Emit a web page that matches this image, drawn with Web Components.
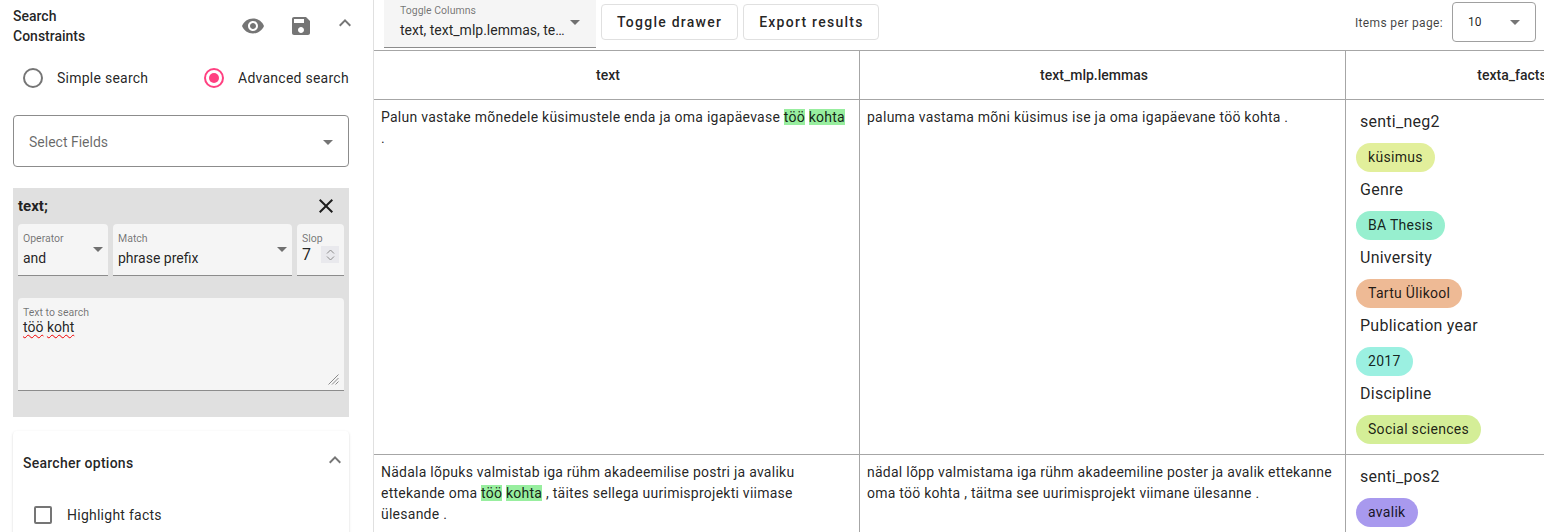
<!DOCTYPE html>
<html lang="et">
<head>
<meta charset="utf-8">
<title>Search results</title>
<style>
  html, body { margin: 0; height: 100%; overflow: hidden; background: #fff; }
  body { font-family: Roboto, "Liberation Sans", sans-serif; color: rgba(0,0,0,.87); }
  mark { background: #98ee9f; color: inherit; }
</style>
</head>
<body>
<app-shell>
  <search-sidebar slot="side"></search-sidebar>
  <results-toolbar slot="top"></results-toolbar>
  <results-table slot="main">
    <result-row>
      <span slot="text">Palun vastake mõnedele küsimustele enda ja oma igapäevase <mark>töö</mark> <mark>kohta</mark> .</span>
      <span slot="lemmas">paluma vastama mõni küsimus ise ja oma igapäevane töö kohta .</span>
      <fact-item label="senti_neg2" value="küsimus" color="#e2ef9b"></fact-item>
      <fact-item label="Genre" value="BA Thesis" color="#97efcf"></fact-item>
      <fact-item label="University" value="Tartu Ülikool" color="#eeba95"></fact-item>
      <fact-item label="Publication year" value="2017" color="#9bf0e1"></fact-item>
      <fact-item label="Discipline" value="Social sciences" color="#d4ee97"></fact-item>
    </result-row>
    <result-row>
      <span slot="text">Nädala lõpuks valmistab iga rühm akadeemilise postri ja avaliku ettekande oma <mark>töö</mark> <mark>kohta</mark> , täites sellega uurimisprojekti viimase ülesande .</span>
      <span slot="lemmas">nädal lõpp valmistama iga rühm akadeemiline poster ja avalik ettekanne oma töö kohta , täitma see uurimisprojekt viimane ülesanne .</span>
      <fact-item label="senti_pos2" value="avalik" color="#a899ee"></fact-item>
    </result-row>
  </results-table>
</app-shell>

<script>
const ICONS = {
  eye: 'M12 4.5C7 4.5 2.73 7.61 1 12c1.73 4.39 6 7.5 11 7.5s9.27-3.11 11-7.5c-1.73-4.39-6-7.5-11-7.5zM12 17c-2.76 0-5-2.24-5-5s2.24-5 5-5 5 2.24 5 5-2.24 5-5 5zm0-8c-1.66 0-3 1.34-3 3s1.34 3 3 3 3-1.34 3-3-1.34-3-3-3z',
  save: 'M17 3H5c-1.11 0-2 .9-2 2v14c0 1.1.89 2 2 2h14c1.1 0 2-.9 2-2V7l-4-4zm-5 16c-1.66 0-3-1.34-3-3s1.34-3 3-3 3 1.34 3 3-1.34 3-3 3zm3-10H5V5h10v4z',
  up: 'M12 8l-6 6 1.41 1.41L12 10.83l4.59 4.58L18 14z',
  close: 'M19 6.41L17.59 5 12 10.59 6.41 5 5 6.41 10.59 12 5 17.59 6.41 19 12 13.41 17.59 19 19 17.59 13.41 12z'
};

class MatIcon extends HTMLElement {
  constructor() {
    super();
    this.attachShadow({ mode: 'open' });
  }
  connectedCallback() {
    const size = this.getAttribute('size') || 24;
    const color = this.getAttribute('color') || 'rgba(0,0,0,.54)';
    this.shadowRoot.innerHTML = `
      <style>:host { display: block; width: ${size}px; height: ${size}px; } svg { display: block; }</style>
      <svg width="${size}" height="${size}" viewBox="0 0 24 24" fill="${color}"><path d="${ICONS[this.getAttribute('name')]}"/></svg>`;
  }
}
customElements.define('mat-icon', MatIcon);

// small triangle used by every select
class SelectArrow extends HTMLElement {
  constructor() {
    super();
    this.attachShadow({ mode: 'open' }).innerHTML = `
      <style>
        :host { display: block; width: 0; height: 0; border-left: 5px solid transparent; border-right: 5px solid transparent; border-top: 5px solid rgba(0,0,0,.54); }
      </style>`;
  }
}
customElements.define('select-arrow', SelectArrow);

class AppShell extends HTMLElement {
  constructor() {
    super();
    this.attachShadow({ mode: 'open' }).innerHTML = `
      <style>
        :host { display: flex; width: 1544px; height: 532px; overflow: hidden; }
        .side { flex: 0 0 373px; border-right: 1px solid #e0e0e0; overflow: hidden; }
        .content { flex: 1; min-width: 0; overflow: hidden; }
      </style>
      <div class="side"><slot name="side"></slot></div>
      <div class="content"><slot name="top"></slot><slot name="main"></slot></div>`;
  }
}
customElements.define('app-shell', AppShell);

class RadioOption extends HTMLElement {
  constructor() {
    super();
    this.attachShadow({ mode: 'open' });
  }
  connectedCallback() {
    const on = this.hasAttribute('checked');
    this.shadowRoot.innerHTML = `
      <style>
        :host { display: flex; align-items: center; gap: 14px; font-size: 14px; letter-spacing: .25px; }
        .ring { box-sizing: border-box; width: 20px; height: 20px; border-radius: 50%; border: 2px solid ${on ? '#ff4081' : 'rgba(0,0,0,.54)'}; display: flex; align-items: center; justify-content: center; }
        .dot { width: 10px; height: 10px; border-radius: 50%; background: #ff4081; display: ${on ? 'block' : 'none'}; }
      </style>
      <div class="ring"><div class="dot"></div></div><slot></slot>`;
  }
}
customElements.define('radio-option', RadioOption);

class FilledField extends HTMLElement {
  constructor() {
    super();
    this.attachShadow({ mode: 'open' });
  }
  connectedCallback() {
    this.shadowRoot.innerHTML = `
      <style>
        :host { display: block; box-sizing: border-box; height: 52px; background: #f5f5f5; border-radius: 4px 4px 0 0; border-bottom: 1px solid #8c8c8c; padding: 8px 5px 0; position: relative; }
        .label { font-size: 10.5px; line-height: 13px; color: rgba(0,0,0,.54); }
        .value { font-size: 14px; line-height: 20px; margin-top: 3px; white-space: nowrap; }
        select-arrow { position: absolute; right: 5px; top: 23px; }
      </style>
      <div class="label">${this.getAttribute('label')}</div>
      <div class="value"><slot></slot></div>
      <select-arrow></select-arrow>`;
  }
}
customElements.define('filled-field', FilledField);

class SlopField extends HTMLElement {
  constructor() {
    super();
    this.attachShadow({ mode: 'open' }).innerHTML = `
      <style>
        :host { display: block; box-sizing: border-box; height: 52px; background: #f5f5f5; border-radius: 4px 4px 0 0; border-bottom: 1px solid #8c8c8c; padding: 8px 5px 0; }
        .label { font-size: 10.5px; line-height: 13px; color: rgba(0,0,0,.54); }
        .row { display: flex; justify-content: space-between; }
        .value { font-size: 16px; line-height: 20px; }
        .spin { width: 18px; height: 17px; margin-top: 1px; background: #e9e9ed; display: flex; flex-direction: column; align-items: center; justify-content: center; gap: 2px; }
        svg { display: block; }
      </style>
      <div class="label">Slop</div>
      <div class="row">
        <div class="value">7</div>
        <div class="spin">
          <svg width="9" height="5" viewBox="0 0 9 5" fill="none" stroke="#8a8a8a"><path d="M1 4.5l3.5-3.5 3.5 3.5"/></svg>
          <svg width="9" height="5" viewBox="0 0 9 5" fill="none" stroke="#8a8a8a"><path d="M1 .5l3.5 3.5 3.5-3.5"/></svg>
        </div>
      </div>`;
  }
}
customElements.define('slop-field', SlopField);

class SearchTextarea extends HTMLElement {
  constructor() {
    super();
    this.attachShadow({ mode: 'open' }).innerHTML = `
      <style>
        :host { display: block; box-sizing: border-box; height: 93px; background: #f5f5f5; border-radius: 4px 4px 0 0; border-bottom: 1px solid #8c8c8c; padding: 8px 5px 0; position: relative; }
        .label { font-size: 10.5px; line-height: 13px; color: rgba(0,0,0,.54); }
        .value { font-size: 14px; line-height: 16px; }
        .word { text-decoration: underline wavy #f00000 1px; text-decoration-skip-ink: none; text-underline-offset: 2px; }
        svg { position: absolute; right: 5px; bottom: 5px; display: block; }
      </style>
      <div class="label">Text to search</div>
      <div class="value"><span class="word">töö</span> <span class="word">koht</span></div>
      <svg width="11" height="11" viewBox="0 0 11 11" stroke="#8a8a8a" stroke-width="1"><path d="M0.5 10.5l10-10M4 10.5l6.5-6.500M7.500 10.500l3-3"/></svg>`;
  }
}
customElements.define('search-textarea', SearchTextarea);

class ConstraintPanel extends HTMLElement {
  constructor() {
    super();
    this.attachShadow({ mode: 'open' }).innerHTML = `
      <style>
        :host { display: block; box-sizing: border-box; height: 229px; background: #e0e0e0; padding: 5px 5px 0; }
        .head { display: flex; justify-content: space-between; align-items: center; height: 26px; margin-bottom: 5px; }
        b { font-size: 15px; font-weight: 700; }
        .close { margin-right: 6px; }
        .fields { display: grid; grid-template-columns: 90px 179px 47px; gap: 5px; margin-bottom: 22px; }
      </style>
      <div class="head"><b>text;</b><mat-icon class="close" name="close" color="rgba(0,0,0,.87)"></mat-icon></div>
      <div class="fields">
        <filled-field label="Operator">and</filled-field>
        <filled-field label="Match">phrase prefix</filled-field>
        <slop-field></slop-field>
      </div>
      <search-textarea></search-textarea>`;
  }
}
customElements.define('constraint-panel', ConstraintPanel);

class SearcherOptions extends HTMLElement {
  constructor() {
    super();
    this.attachShadow({ mode: 'open' }).innerHTML = `
      <style>
        :host { display: block; height: 110px; background: #fff; border-radius: 4px 4px 0 0; box-shadow: 0 2px 1px -1px rgba(0,0,0,.2), 0 1px 1px rgba(0,0,0,.14), 0 1px 3px rgba(0,0,0,.12); padding: 0 10px; }
        .head { display: flex; justify-content: space-between; align-items: center; height: 64px; font-size: 14px; font-weight: 500; letter-spacing: .25px; }
        .head mat-icon { margin: -6px -8px 0 0; }
        .opt { display: flex; align-items: center; gap: 15px; margin: 11px 0 0 11px; font-size: 14px; letter-spacing: .25px; }
        .box { box-sizing: border-box; width: 18px; height: 18px; border: 2px solid rgba(0,0,0,.54); border-radius: 2px; }
      </style>
      <div class="head">Searcher options<mat-icon name="up"></mat-icon></div>
      <div class="opt"><div class="box"></div>Highlight facts</div>`;
  }
}
customElements.define('searcher-options', SearcherOptions);

class SearchSidebar extends HTMLElement {
  constructor() {
    super();
    this.attachShadow({ mode: 'open' }).innerHTML = `
      <style>
        :host { display: block; padding: 0 24px 0 13px; }
        .title { display: flex; align-items: center; height: 52px; margin-right: -7px; }
        h2 { margin: 0; flex: 1; font-size: 14px; line-height: 20px; font-weight: 500; }
        .t1 { margin-right: 24px; } .t2 { margin-right: 20px; } .t3 { margin: -6px -1px 0 0; }
        .modes { display: flex; height: 52px; padding-left: 10px; }
        .modes radio-option:first-child { width: 181px; }
        .select { box-sizing: border-box; height: 52px; margin: 11px 0 21px; border: 1px solid #8c8c8c; border-radius: 4px; display: flex; align-items: center; justify-content: space-between; padding: 2px 15px 0 15px; font-size: 14px; color: rgba(0,0,0,.6); }
        searcher-options { margin-top: 14px; }
      </style>
      <div class="title">
        <h2>Search<br>Constraints</h2>
        <mat-icon class="t1" name="eye"></mat-icon>
        <mat-icon class="t2" name="save"></mat-icon>
        <mat-icon class="t3" name="up"></mat-icon>
      </div>
      <div class="modes">
        <radio-option>Simple search</radio-option>
        <radio-option checked>Advanced search</radio-option>
      </div>
      <div class="select">Select Fields<select-arrow></select-arrow></div>
      <constraint-panel></constraint-panel>
      <searcher-options></searcher-options>`;
  }
}
customElements.define('search-sidebar', SearchSidebar);

class ResultsToolbar extends HTMLElement {
  constructor() {
    super();
    this.attachShadow({ mode: 'open' }).innerHTML = `
      <style>
        :host { display: flex; box-sizing: border-box; height: 50px; padding: 0 8px 0 10px; }
        .cols { box-sizing: border-box; width: 212px; height: 48px; background: #f5f5f5; border-bottom: 1px solid #8c8c8c; padding: 4px 16px 0; position: relative; }
        .cols .label { font-size: 10.5px; line-height: 13px; color: rgba(0,0,0,.54); }
        .cols .value { font-size: 14px; line-height: 20px; margin-top: 3px; white-space: nowrap; }
        .cols select-arrow { position: absolute; right: 16px; top: 20px; }
        button { box-sizing: border-box; height: 36px; margin: 4px 0 0 5px; padding: 0 15px; background: #fff; border: 1px solid #e0e0e0; border-radius: 4px; font: 500 14px Roboto, sans-serif; letter-spacing: 1.25px; color: rgba(0,0,0,.87); }
        button.export { padding-right: 14px; }
        .pager { margin-left: auto; display: flex; align-items: flex-start; }
        .pager span { font-size: 12px; letter-spacing: .36px; line-height: 46px; margin-right: 9px; color: rgba(0,0,0,.75); }
        .size { box-sizing: border-box; width: 84px; height: 40px; margin-top: 2px; border: 1px solid #a0a0a0; border-radius: 4px; padding: 0 15px; display: flex; align-items: center; justify-content: space-between; font-size: 12px; }
      </style>
      <div class="cols">
        <div class="label">Toggle Columns</div>
        <div class="value">text, text_mlp.lemmas, te…</div>
        <select-arrow></select-arrow>
      </div>
      <button>Toggle drawer</button>
      <button class="export">Export results</button>
      <div class="pager"><span>Items per page:</span><div class="size">10<select-arrow></select-arrow></div></div>`;
  }
}
customElements.define('results-toolbar', ResultsToolbar);

const COLS = 'grid-template-columns: 486px 486px 349px;';

class ResultsTable extends HTMLElement {
  constructor() {
    super();
    this.attachShadow({ mode: 'open' }).innerHTML = `
      <style>
        :host { display: block; border-top: 1px solid #a6a6a6; }
        .head { display: grid; ${COLS} height: 48px; border-bottom: 1px solid #a6a6a6; }
        .head div { box-sizing: border-box; display: flex; align-items: center; justify-content: center; padding-right: 17px; font-size: 14px; font-weight: 500; white-space: nowrap; border-right: 1px solid #a6a6a6; }
        .head div:last-child { border-right: 0; }
      </style>
      <div class="head"><div>text</div><div>text_mlp.lemmas</div><div>texta_facts</div></div>
      <slot></slot>`;
  }
}
customElements.define('results-table', ResultsTable);

class ResultRow extends HTMLElement {
  constructor() {
    super();
    this.attachShadow({ mode: 'open' }).innerHTML = `
      <style>
        :host { display: grid; ${COLS} border-bottom: 1px solid #a6a6a6; }
        .cell { box-sizing: border-box; border-right: 1px solid #a6a6a6; padding: 7px 7px 0; font-size: 14px; line-height: 21px; letter-spacing: .25px; }
        .facts { padding: 11px 0 3px 10px; border-right: 0; }
      </style>
      <div class="cell"><slot name="text"></slot></div>
      <div class="cell"><slot name="lemmas"></slot></div>
      <div class="cell facts"><slot></slot></div>`;
  }
}
customElements.define('result-row', ResultRow);

class FactItem extends HTMLElement {
  constructor() {
    super();
    this.attachShadow({ mode: 'open' });
  }
  connectedCallback() {
    this.shadowRoot.innerHTML = `
      <style>
        :host { display: block; height: 68px; }
        .name { font-size: 16px; line-height: 22px; padding-left: 4px; white-space: nowrap; letter-spacing: .25px; }
        .chip { display: inline-block; margin-top: 10px; height: 29px; line-height: 29px; padding: 0 12px; border-radius: 15px; font-size: 14px; letter-spacing: .3px; color: rgba(0,0,0,.87); background: ${this.getAttribute('color')}; white-space: nowrap; }
      </style>
      <div class="name">${this.getAttribute('label')}</div>
      <div class="chip">${this.getAttribute('value')}</div>`;
  }
}
customElements.define('fact-item', FactItem);
</script>
</body>
</html>
